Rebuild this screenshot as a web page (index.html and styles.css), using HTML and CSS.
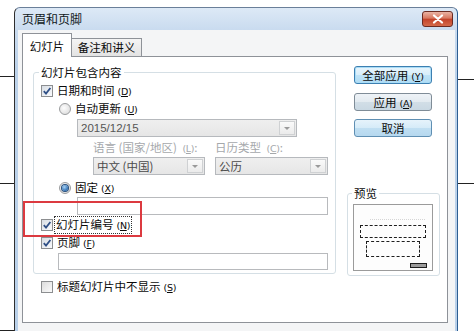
FILE: index.html
```html
<!DOCTYPE html>
<html lang="zh-CN">
<head>
<meta charset="utf-8">
<title>页眉和页脚</title>
<link rel="stylesheet" href="styles.css">
</head>
<body>
<div class="desk">
  <i class="ln ln-l1"></i>
  <i class="ln ln-l2"></i>
  <i class="ln ln-l3"></i>
  <i class="ln ln-r1"></i>
  <i class="ln ln-r2"></i>

  <div class="window">
    <div class="titlebar">
      <span class="title">页眉和页脚</span>
      <span class="close">
        <svg width="12" height="10" viewBox="0 0 12 10"><path d="M2 1.5 L10 8.5 M10 1.5 L2 8.5" stroke="#fff" stroke-width="2.2" stroke-linecap="round"/></svg>
      </span>
    </div>
    <div class="client">
      <div class="tabs">
        <div class="tab tab-sel">幻灯片</div>
        <div class="tab">备注和讲义</div>
      </div>
      <div class="panel">
        <div class="leftcol">
          <fieldset class="grp grp-main">
            <legend>幻灯片包含内容</legend>
            <div class="row r1"><span class="cb on"><svg width="10" height="10" viewBox="0 0 10 10"><path d="M1.8 5.2 L4 7.6 L8.4 2" fill="none" stroke="#2f4f86" stroke-width="1.8"/></svg></span><span class="lbl">日期和时间<span class="ak">(<u>D</u>)</span></span></div>
            <div class="row r2 ind"><span class="rb"></span><span class="lbl">自动更新<span class="ak">(<u>U</u>)</span></span></div>
            <div class="dd dd-date"><span class="dd-text">2015/12/15</span><span class="dd-btn"><i></i></span></div>
            <div class="row r4 dis"><span class="lab-lang">语言 (国家/地区) <span class="ak">(<u>L</u>)</span>:</span><span class="lab-cal">日历类型 <span class="ak">(<u>C</u>)</span>:</span></div>
            <div class="ddrow">
              <div class="dd dd-lang"><span class="dd-text">中文 (中国)</span><span class="dd-btn"><i></i></span></div>
              <div class="dd dd-cal"><span class="dd-text">公历</span><span class="dd-btn"><i></i></span></div>
            </div>
            <div class="row r6 ind"><span class="rb on"><i></i></span><span class="lbl">固定<span class="ak">(<u>X</u>)</span></span></div>
            <div class="tb tb-fixed"></div>
            <div class="row r8"><span class="cb on"><svg width="10" height="10" viewBox="0 0 10 10"><path d="M1.8 5.2 L4 7.6 L8.4 2" fill="none" stroke="#2f4f86" stroke-width="1.8"/></svg></span><span class="lbl focus">幻灯片编号<span class="ak">(<u>N</u>)</span></span></div>
            <div class="row r9"><span class="cb on"><svg width="10" height="10" viewBox="0 0 10 10"><path d="M1.8 5.2 L4 7.6 L8.4 2" fill="none" stroke="#2f4f86" stroke-width="1.8"/></svg></span><span class="lbl">页脚<span class="ak">(<u>F</u>)</span></span></div>
            <div class="tb tb-footer"></div>
          </fieldset>
          <div class="row r11"><span class="cb"></span><span class="lbl">标题幻灯片中不显示<span class="ak">(<u>S</u>)</span></span></div>
        </div>
        <div class="rightcol">
          <div class="btn btn-def">全部应用<span class="ak">(<u>Y</u>)</span></div>
          <div class="btn btn-2">应用<span class="ak">(<u>A</u>)</span></div>
          <div class="btn btn-3">取消</div>
          <fieldset class="grp grp-prev">
            <legend>预览</legend>
            <div class="thumb">
              <i class="t-dots"></i>
              <i class="t-box1"></i>
              <i class="t-box2"></i>
              <i class="t-bar"></i>
            </div>
          </fieldset>
        </div>
      </div>
    </div>
  </div>

  <div class="hilite"></div>
</div>
</body>
</html>
```

FILE: styles.css
```css
* { box-sizing: border-box; }
html, body { margin: 0; padding: 0; }
body {
  width: 474px; height: 331px; overflow: hidden; background: #fff;
  font-family: "Noto Sans CJK SC", "Noto Sans", sans-serif;
  font-size: 11.5px; color: #0a0a0a;
}
.desk { position: relative; width: 474px; height: 331px; }

.ln { position: absolute; background: #222; height: 1px; }
.ln-l1 { left: 0; top: 76px; width: 15px; }
.ln-l2 { left: 0; top: 183px; width: 15px; }
.ln-l3 { left: 0; top: 330px; width: 15px; }
.ln-r1 { left: 458px; top: 79px; width: 16px; }
.ln-r2 { left: 458px; top: 183px; width: 16px; }

.window {
  position: absolute; left: 14px; top: 7px; width: 444px; height: 330px;
  border: 1px solid #6a7f99; border-left-color: #2e2e2e; border-right: 1px solid #2d5e92;
  border-radius: 6px 6px 0 0;
  background: linear-gradient(#dde9f6, #c9dbef 22px, #bcd2ea 60px, #b9d0e9);
  padding: 0 2px 0 3px;
  display: flex; flex-direction: column;
}
.titlebar {
  height: 22px; flex: none; display: flex; justify-content: space-between; align-items: flex-start;
  padding-left: 4px;
}
.title { line-height: 22px; font-size: 12px; color: #101820; }
.close {
  margin-top: 3px; margin-right: 2px; width: 31px; height: 16px;
  border: 1px solid #6b2b22; border-radius: 3px;
  background: linear-gradient(#eab3a4, #d8775f 45%, #c3422a 50%, #d46a4a);
  display: flex; align-items: center; justify-content: center;
}

.client {
  flex: 1; background: #f4f5f6;
  padding: 3px 0 0 4px;
  display: flex; flex-direction: column;
}
.tabs { height: 23px; display: flex; align-items: flex-end; position: relative; z-index: 1; }
.tab {
  height: 18px; padding: 0; line-height: 16px; font-size: 11.5px; white-space: nowrap;
  border: 1px solid #8e9298; border-left: none; border-bottom: none;
  background: linear-gradient(#f4f4f4, #e3e3e3);
  width: 70px; text-align: center;
}
.tab-sel {
  height: 24px; margin-bottom: -1px; width: 50px; border-left: 1px solid #8e9298;
  background: #fff; line-height: 24px; padding: 0;
}
.panel {
  width: 426px; height: 267px; border: 1px solid #8e9298; background: #fff;
  display: flex; padding-left: 10px;
}

.leftcol { width: 303px; display: flex; flex-direction: column; }
.grp {
  margin: 0; padding: 0; border: 1px solid #d5dfe5; border-radius: 3px;
  display: flex; flex-direction: column; min-width: 0;
}
.grp legend { padding: 0 2px; margin-left: 5px; line-height: 14px; height: 14px; }
.grp-main { margin-top: 8px; height: 209px; padding-bottom: 2px; }

.row { display: flex; align-items: center; height: 14px; line-height: 14px; white-space: nowrap; }
.lbl { margin-left: 4px; }
.ak { font-family: "DejaVu Sans", sans-serif; font-size: 9.5px; margin-left: 3px; letter-spacing: -0.3px; }
.ak u { text-decoration-thickness: 1px; text-underline-offset: 1px; }

.cb {
  width: 12px; height: 12px; margin-left: 7px; flex: none;
  border: 1px solid #8c8e90;
  background: linear-gradient(135deg, #dcdcdc, #fbfbfb);
  display: flex; align-items: center; justify-content: center;
}
.cb.on { background: linear-gradient(135deg, #d7dde3, #fafbfd); }
.rb {
  width: 12px; height: 12px; margin-left: 25px; flex: none; border-radius: 50%;
  border: 1px solid #9a9c9e;
  background: radial-gradient(circle at 40% 40%, #fdfdfd, #d6d6d6);
  display: flex; align-items: center; justify-content: center;
}
.rb.on i {
  width: 6px; height: 6px; border-radius: 50%;
  background: radial-gradient(circle at 40% 35%, #a9d3f5, #2e6fb4 70%, #1d4f8a);
  box-shadow: 0 0 0 1px #284f7c;
}
.r1 { margin-top: 5px; }
.r2 { margin-top: 4px; }
.dd {
  height: 18px; border: 1px solid #b6b9bd; background: linear-gradient(#efefef, #e6e6e6);
  display: flex; justify-content: space-between; align-items: stretch;
}
.dd-text { line-height: 16px; padding-left: 3px; color: #4a4a4a; }
.dd-btn {
  width: 16px; margin: 1px; border: 1px solid #cfd1d3; background: linear-gradient(#fafafa, #ebebeb);
  display: flex; align-items: center; justify-content: center;
}
.dd-btn i { width: 0; height: 0; border-left: 3px solid transparent; border-right: 3px solid transparent; border-top: 3px solid #9a9a9a; }
.dd-date { margin-top: 3px; margin-left: 43px; width: 220px; }
.dd-date .dd-text { font-family: "Liberation Sans", sans-serif; font-size: 11.5px; color: #555; }

.r4 { margin-top: 4px; color: #a5a8ab; }
.lab-lang { margin-left: 59px; width: 122px; }
.ddrow { display: flex; margin-top: 2px; margin-left: 59px; gap: 10px; }
.dd-lang { width: 112px; }
.dd-cal { width: 113px; }
.r6 { margin-top: 6px; }
.tb { height: 18px; border: 1px solid #b8babd; background: #fff; }
.tb-fixed { margin-top: 2px; margin-left: 43px; width: 251px; }
.r8 { margin-top: 3px; }
.focus { outline: 1px dotted #333; outline-offset: 0; padding: 0 1px; margin-left: 2px; }
.r9 { margin-top: 4px; }
.tb-footer { margin-top: 3px; margin-left: 24px; width: 270px; height: 17px; }
.r11 { margin-top: 6px; margin-left: 1px; }

.rightcol { margin-left: 11px; width: 93px; display: flex; flex-direction: column; }
.btn {
  width: 78px; height: 18px; margin-left: 7px; border-radius: 3px;
  border: 1px solid #7f8c97; text-align: center; line-height: 16px;
  background: linear-gradient(#eef3f7, #e2eaf0 50%, #d2dee7 50%, #c9d8e3);
  white-space: nowrap;
}
.btn-def {
  margin-top: 9px; border-color: #3c7fb1;
  background: linear-gradient(#e9f5fc, #d7eefb 50%, #bfe3f7 50%, #b1dcf4);
  box-shadow: inset 0 0 0 1px #a9dcf6;
}
.btn-2 { margin-top: 9px; }
.btn-3 { margin-top: 8px; border-color: #5f8fb3; background: linear-gradient(#e6f3fb, #d5ebf8 50%, #c0dff2 50%, #b6d8ef); }
.grp-prev { margin-top: 49px; height: 90px; padding-bottom: 3px; }
.grp-prev legend { margin-left: 4px; }
.thumb {
  margin-top: 4px; margin-left: 5px; width: 80px; height: 67px;
  border: 1px solid #9b9b9b; background: #fdfdfd;
  display: flex; flex-direction: column; align-items: flex-start;
}
.thumb i { display: block; flex: none; }
.t-dots { margin-top: 14px; margin-left: 16px; width: 55px; height: 0; border-top: 1px dotted #d6d6d6; }
.t-box1 { margin-top: 5px; margin-left: 6px; width: 66px; height: 13px; border: 1px dashed #1e1e1e; }
.t-box2 { margin-top: 3px; margin-left: 12px; width: 54px; height: 16px; border: 1px dashed #1e1e1e; }
.t-bar { margin-top: 6px; margin-left: 56px; width: 17px; height: 5px; border: 1px solid #1e1e1e; background: #9c9c9c; }

.hilite {
  position: absolute; left: 23px; top: 201px; width: 119px; height: 36px;
  border: 2px solid #dc3a40;
}
```
